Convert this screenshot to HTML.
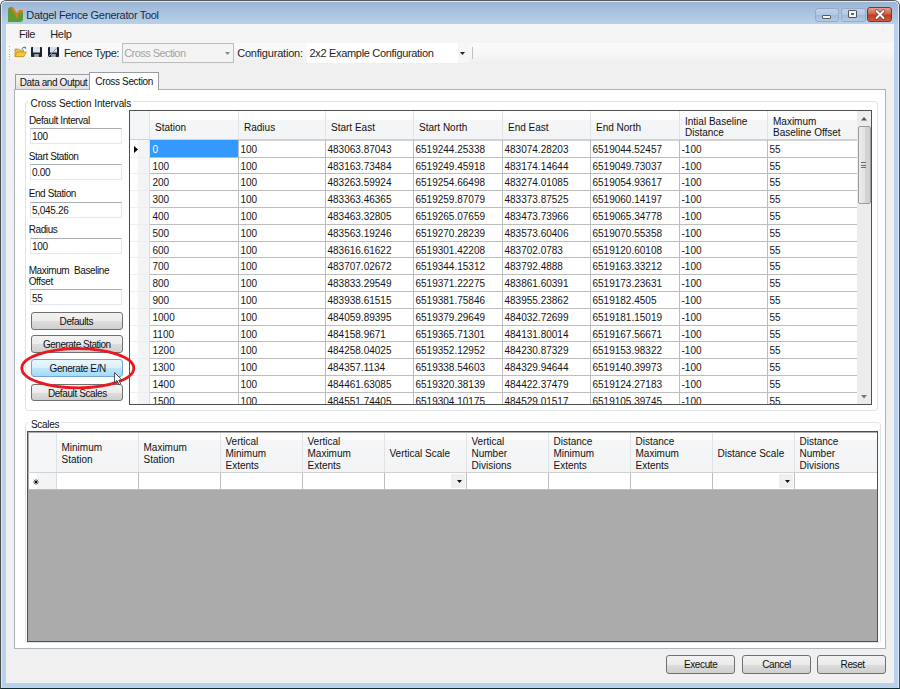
<!DOCTYPE html><html><head><meta charset="utf-8"><style>
html,body{margin:0;padding:0;width:900px;height:689px;overflow:hidden;background:#fff}
*{box-sizing:border-box}
.a{position:absolute}
.t{position:absolute;white-space:pre;font-family:"Liberation Sans",sans-serif;line-height:1}
.btn{position:absolute;border:1px solid #707070;border-radius:3px;background:linear-gradient(#f2f2f2 0%,#ebebeb 50%,#dddddd 51%,#cfcfcf 100%)}
.btnh{position:absolute;border:1px solid #6fa8d8;border-radius:3px;background:linear-gradient(#eaf6fd 0%,#d9f0fc 50%,#bee6fd 51%,#a7d9f5 100%)}
.tb{position:absolute;background:#fff;border:1px solid #e3e9ef;border-top-color:#abadb3}
</style></head><body>
<div class="a" style="left:0.0px;top:0.0px;width:900.0px;height:689.0px;background:#b9d1ea;border:1px solid #4a4a4a;border-top-color:#5a5a5a;border-bottom-color:#0a2a30;border-radius:6px 6px 0 0"></div>
<div class="a" style="left:1.0px;top:1.0px;width:898.0px;height:687.0px;border:1px solid #dbe9f9;border-bottom-color:#9fe3f3;border-radius:5px 5px 0 0"></div>
<div class="a" style="left:2.0px;top:2.0px;width:896.0px;height:22.0px;background:linear-gradient(#9bb5d5,#b8d1ea);border-radius:4px 4px 0 0"></div>
<svg class="a" style="left:8px;top:7px" width="16" height="16" viewBox="0 0 16 16">
<path d="M0 3 Q0 0 3 0 L4 0 L8.6 6.5 L11.5 3 L15 3 L15 12 Q15 15 12 15 L0 15 Z" fill="#5f9b35"/>
<path d="M4.2 0.6 L8.6 7.8 L12 4.2 L15 4.2 M8.6 7.5 L8.8 10.8" stroke="#e87a1c" stroke-width="2.2" fill="none" stroke-linejoin="bevel"/>
</svg>
<div class="t" style="left:26.3px;top:10.1px;font-size:11px;letter-spacing:-0.32px;color:#1b2b45;">Datgel Fence Generator Tool</div>
<div class="a" style="left:815.0px;top:8.0px;width:24.0px;height:14.0px;border:1px solid #93abc8;border-radius:3px;background:linear-gradient(#bfd3ea,#b0c8e4 50%,#9fb9d9 51%,#b3cbe6)"></div>
<div class="a" style="left:822.0px;top:14.5px;width:9.0px;height:4.0px;background:#f4f4f4;border:1px solid #5a5a5a;border-radius:1px"></div>
<div class="a" style="left:841.0px;top:8.0px;width:25.0px;height:14.0px;border:1px solid #93abc8;border-radius:3px;background:linear-gradient(#bfd3ea,#b0c8e4 50%,#9fb9d9 51%,#b3cbe6)"></div>
<div class="a" style="left:848.0px;top:10.0px;width:9.0px;height:8.0px;background:#f4f4f4;border:1px solid #555;border-radius:1px"></div>
<div class="a" style="left:851.0px;top:13.0px;width:3.0px;height:2.0px;background:#4b6a93"></div>
<div class="a" style="left:867.0px;top:7.0px;width:25.0px;height:15.0px;border:1px solid #6e3a3a;border-radius:3px;background:linear-gradient(#e8a08c,#d0604a 45%,#c33a20 55%,#d45a3c)"></div>
<svg class="a" style="left:874px;top:9px" width="12" height="11" viewBox="0 0 12 11"><path d="M2.5 2 L9.5 9 M9.5 2 L2.5 9" stroke="#6a4040" stroke-width="3.2" stroke-linecap="round"/><path d="M2.5 2 L9.5 9 M9.5 2 L2.5 9" stroke="#fff" stroke-width="1.9" stroke-linecap="round"/></svg>
<div class="a" style="left:6.0px;top:24.0px;width:888.0px;height:659.0px;background:#f0f0f0"></div>
<div class="a" style="left:6.0px;top:24.0px;width:888.0px;height:19.0px;background:#f5f5f5"></div>
<div class="t" style="left:19.1px;top:29.1px;font-size:11px;letter-spacing:-0.45px;color:#1e1e1e;">File</div>
<div class="t" style="left:50.2px;top:29.1px;font-size:11px;letter-spacing:-0.3px;color:#1e1e1e;">Help</div>
<div class="a" style="left:6.0px;top:43.0px;width:888.0px;height:21.0px;background:linear-gradient(#fafafa,#f7f7f7 50%,#eeeeee)"></div>
<div class="a" style="left:9.0px;top:46.0px;width:1.0px;height:1.0px;background:#b4b4b4"></div>
<div class="a" style="left:9.0px;top:48.5px;width:1.0px;height:1.0px;background:#b4b4b4"></div>
<div class="a" style="left:9.0px;top:51.0px;width:1.0px;height:1.0px;background:#b4b4b4"></div>
<div class="a" style="left:9.0px;top:53.5px;width:1.0px;height:1.0px;background:#b4b4b4"></div>
<div class="a" style="left:9.0px;top:56.0px;width:1.0px;height:1.0px;background:#b4b4b4"></div>
<div class="a" style="left:9.0px;top:58.5px;width:1.0px;height:1.0px;background:#b4b4b4"></div>
<svg class="a" style="left:14px;top:46px" width="13" height="12" viewBox="0 0 13 12">
<path d="M1 3 L4.5 3 L5.5 4 L9.5 4 L9.5 10.5 L1 10.5 Z" fill="#e6c260" stroke="#b89030" stroke-width="0.8"/>
<path d="M3 6 L12.3 6 L9.8 10.7 L1 10.7 Z" fill="#f4c838" stroke="#c09020" stroke-width="0.8"/>
<path d="M8 2.8 Q9.5 0.5 11.8 1.6" stroke="#3a70c0" stroke-width="1.1" fill="none"/><path d="M11 0.6 L12.6 2.2 L10.8 2.8 Z" fill="#3a70c0"/>
</svg>
<svg class="a" style="left:31px;top:47px" width="11" height="10" viewBox="0 0 11 10">
<rect x="0" y="0" width="11" height="10" rx="0.8" fill="#1c2330"/><rect x="2" y="0" width="7" height="5.5" fill="#dfe5ec"/><rect x="3.2" y="7" width="4.6" height="3" fill="#9aa2ac"/>
</svg>
<svg class="a" style="left:47px;top:47px" width="12" height="11" viewBox="0 0 12 11">
<rect x="1" y="0" width="11" height="10" rx="0.8" fill="#1c2330"/><rect x="3" y="0" width="7" height="5.5" fill="#d8dee6"/><rect x="4.2" y="7" width="4.6" height="3" fill="#9aa2ac"/>
<path d="M0.5 10.5 L9.5 1.5" stroke="#8a96a6" stroke-width="1"/>
</svg>
<div class="t" style="left:64.0px;top:47.9px;font-size:11px;letter-spacing:-0.5px;color:#1e1e1e;">Fence Type:</div>
<div class="a" style="left:122.0px;top:43.0px;width:112.0px;height:20.0px;background:#f4f4f4;border:1px solid #bdbdbd"></div>
<div class="t" style="left:124.2px;top:47.9px;font-size:11px;letter-spacing:-0.55px;color:#a3a3a3;">Cross Section</div>
<svg class="a" style="left:225px;top:52px" width="5" height="3"><path d="M0 0 L5 0 L2.5 3 Z" fill="#888"/></svg>
<div class="t" style="left:237.2px;top:47.9px;font-size:11px;letter-spacing:-0.2px;color:#1e1e1e;">Configuration:</div>
<div class="a" style="left:307.0px;top:43.0px;width:162.0px;height:20.0px;background:#fff"></div>
<div class="a" style="left:458.0px;top:43.0px;width:11.0px;height:20.0px;background:#f6f6f6"></div>
<div class="t" style="left:309.5px;top:47.9px;font-size:11px;letter-spacing:-0.32px;color:#1e1e1e;">2x2 Example Configuration</div>
<svg class="a" style="left:460px;top:52px" width="5" height="3"><path d="M0 0 L5 0 L2.5 3 Z" fill="#222"/></svg>
<div class="a" style="left:472.0px;top:47.0px;width:1.0px;height:12.0px;background:#c0c0c0"></div>
<div class="a" style="left:15.0px;top:74.0px;width:75.0px;height:16.0px;border:1px solid #9a9ca4;border-bottom:none;background:linear-gradient(#f3f3f3,#ebebeb 50%,#dedede)"></div>
<div class="t" style="left:19.8px;top:78.0px;font-size:10px;letter-spacing:-0.4px;color:#111;">Data and Output</div>
<div class="a" style="left:14.0px;top:89.0px;width:872.0px;height:560.0px;background:#fff;border:1px solid #aeb2b9"></div>
<div class="a" style="left:89.0px;top:72.0px;width:70.0px;height:18.0px;border:1px solid #9a9ca4;border-bottom:none;background:#fff"></div>
<div class="t" style="left:95.3px;top:76.9px;font-size:10px;letter-spacing:-0.35px;color:#111;">Cross Section</div>
<div class="a" style="left:24.8px;top:101.3px;width:853.2px;height:309.7px;border:1px solid #dce4e9;border-radius:3px"></div>
<div class="a" style="left:28.0px;top:97.0px;width:106.0px;height:7.0px;background:#fff"></div>
<div class="t" style="left:30.6px;top:98.7px;font-size:10px;letter-spacing:-0.1px;color:#111;">Cross Section Intervals</div>
<div class="t" style="left:29.0px;top:115.6px;font-size:10px;letter-spacing:-0.4px;color:#111;">Default Interval</div>
<div class="t" style="left:28.7px;top:151.5px;font-size:10px;letter-spacing:-0.4px;color:#111;">Start Station</div>
<div class="t" style="left:28.7px;top:189.1px;font-size:10px;letter-spacing:-0.4px;color:#111;">End Station</div>
<div class="t" style="left:28.7px;top:225.4px;font-size:10px;letter-spacing:-0.4px;color:#111;">Radius</div>
<div class="t" style="left:28.7px;top:265.8px;font-size:10px;letter-spacing:-0.4px;color:#111;">Maximum  Baseline</div>
<div class="t" style="left:28.7px;top:276.8px;font-size:10px;letter-spacing:-0.4px;color:#111;">Offset</div>
<div class="a" style="left:30.0px;top:128.0px;width:92.0px;height:16.0px;background:#fff;border:1px solid #e3e9ef;border-top-color:#abadb3;border-left-color:#e2e3ea"></div>
<div class="t" style="left:32.0px;top:132.4px;font-size:10px;letter-spacing:-0.3px;color:#111;">100</div>
<div class="a" style="left:30.0px;top:164.0px;width:92.0px;height:16.0px;background:#fff;border:1px solid #e3e9ef;border-top-color:#abadb3;border-left-color:#e2e3ea"></div>
<div class="t" style="left:32.0px;top:168.4px;font-size:10px;letter-spacing:-0.3px;color:#111;">0.00</div>
<div class="a" style="left:30.0px;top:202.0px;width:92.0px;height:15.5px;background:#fff;border:1px solid #e3e9ef;border-top-color:#abadb3;border-left-color:#e2e3ea"></div>
<div class="t" style="left:32.0px;top:206.4px;font-size:10px;letter-spacing:-0.3px;color:#111;">5,045.26</div>
<div class="a" style="left:30.0px;top:238.0px;width:92.0px;height:16.0px;background:#fff;border:1px solid #e3e9ef;border-top-color:#abadb3;border-left-color:#e2e3ea"></div>
<div class="t" style="left:32.0px;top:242.4px;font-size:10px;letter-spacing:-0.3px;color:#111;">100</div>
<div class="a" style="left:30.0px;top:289.4px;width:92.0px;height:15.6px;background:#fff;border:1px solid #e3e9ef;border-top-color:#abadb3;border-left-color:#e2e3ea"></div>
<div class="t" style="left:32.0px;top:293.8px;font-size:10px;letter-spacing:-0.3px;color:#111;">55</div>
<div class="btn" style="left:31px;top:312.3px;width:92px;height:17.4px"></div>
<div class="t" style="left:59.6px;top:316.8px;font-size:10px;letter-spacing:-0.4px;color:#111;">Defaults</div>
<div class="btn" style="left:31px;top:335.2px;width:92px;height:17.4px"></div>
<div class="t" style="left:43.0px;top:339.7px;font-size:10px;letter-spacing:-0.5px;color:#111;">Generate Station</div>
<div class="btnh" style="left:31px;top:359.4px;width:92px;height:17.7px"></div>
<div class="t" style="left:49.5px;top:363.9px;font-size:10px;letter-spacing:-0.4px;color:#111;">Generate E/N</div>
<div class="btn" style="left:31px;top:384.4px;width:92px;height:17.1px"></div>
<div class="t" style="left:47.9px;top:388.9px;font-size:10px;letter-spacing:-0.4px;color:#111;">Default Scales</div>
<div class="a" style="left:129.0px;top:110.0px;width:743.0px;height:295.0px;background:#fff;border:1px solid #505050"></div>
<div class="a" style="left:130.0px;top:111.0px;width:727.0px;height:28.0px;background:linear-gradient(#ffffff 0%,#ffffff 30%,#f5f6f8 31%,#f3f4f6 100%)"></div>
<div class="a" style="left:130.0px;top:111.0px;width:19.0px;height:28.0px;background:#f5f6f8"></div>
<div class="a" style="left:148.5px;top:111.0px;width:1.5px;height:28.0px;background:#dadbde"></div>
<div class="a" style="left:130.0px;top:138.5px;width:727.0px;height:2.0px;background:#d2d2d2"></div>
<div class="a" style="left:149.0px;top:111.0px;width:1.0px;height:28.0px;background:#e2e3e6"></div>
<div class="a" style="left:238.0px;top:111.0px;width:1.0px;height:28.0px;background:#e2e3e6"></div>
<div class="a" style="left:325.0px;top:111.0px;width:1.0px;height:28.0px;background:#e2e3e6"></div>
<div class="a" style="left:413.0px;top:111.0px;width:1.0px;height:28.0px;background:#e2e3e6"></div>
<div class="a" style="left:502.0px;top:111.0px;width:1.0px;height:28.0px;background:#e2e3e6"></div>
<div class="a" style="left:590.0px;top:111.0px;width:1.0px;height:28.0px;background:#e2e3e6"></div>
<div class="a" style="left:679.0px;top:111.0px;width:1.0px;height:28.0px;background:#e2e3e6"></div>
<div class="a" style="left:767.0px;top:111.0px;width:1.0px;height:28.0px;background:#e2e3e6"></div>
<div class="a" style="left:857.0px;top:111.0px;width:1.0px;height:28.0px;background:#e2e3e6"></div>
<div class="t" style="left:155.0px;top:122.6px;font-size:10px;letter-spacing:0px;color:#111;">Station</div>
<div class="t" style="left:244.0px;top:122.6px;font-size:10px;letter-spacing:0px;color:#111;">Radius</div>
<div class="t" style="left:331.0px;top:122.6px;font-size:10px;letter-spacing:0px;color:#111;">Start East</div>
<div class="t" style="left:419.0px;top:122.6px;font-size:10px;letter-spacing:0px;color:#111;">Start North</div>
<div class="t" style="left:508.0px;top:122.6px;font-size:10px;letter-spacing:0px;color:#111;">End East</div>
<div class="t" style="left:596.0px;top:122.6px;font-size:10px;letter-spacing:0px;color:#111;">End North</div>
<div class="t" style="left:685.0px;top:116.6px;font-size:10px;letter-spacing:0px;color:#111;">Intial Baseline</div>
<div class="t" style="left:685.0px;top:128.2px;font-size:10px;letter-spacing:0px;color:#111;">Distance</div>
<div class="t" style="left:773.0px;top:116.6px;font-size:10px;letter-spacing:0px;color:#111;">Maximum</div>
<div class="t" style="left:773.0px;top:128.2px;font-size:10px;letter-spacing:0px;color:#111;">Baseline Offset</div>
<div class="a" style="left:130.0px;top:140.0px;width:19.0px;height:264.0px;background:linear-gradient(90deg,#ffffff 0,#ffffff 7px,#f4f5f7 8px,#f2f3f5 100%)"></div>
<div class="a" style="left:150.0px;top:140.0px;width:88.0px;height:16.5px;background:#3399ff"></div>
<div class="t" style="left:152.5px;top:144.8px;font-size:10px;letter-spacing:0px;color:#fff;">0</div>
<div class="t" style="left:240.5px;top:144.8px;font-size:10px;letter-spacing:0px;color:#151515;">100</div>
<div class="t" style="left:327.5px;top:144.8px;font-size:10px;letter-spacing:0px;color:#151515;">483063.87043</div>
<div class="t" style="left:415.5px;top:144.8px;font-size:10px;letter-spacing:0px;color:#151515;">6519244.25338</div>
<div class="t" style="left:504.5px;top:144.8px;font-size:10px;letter-spacing:0px;color:#151515;">483074.28203</div>
<div class="t" style="left:592.5px;top:144.8px;font-size:10px;letter-spacing:0px;color:#151515;">6519044.52457</div>
<div class="t" style="left:681.5px;top:144.8px;font-size:10px;letter-spacing:0px;color:#151515;">-100</div>
<div class="t" style="left:769.5px;top:144.8px;font-size:10px;letter-spacing:0px;color:#151515;">55</div>
<div class="a" style="left:150.0px;top:156.5px;width:707.0px;height:1.0px;background:#bdbdbd"></div>
<div class="a" style="left:130.0px;top:156.5px;width:19.0px;height:1.0px;background:#eeeff2"></div>
<div class="t" style="left:152.5px;top:161.6px;font-size:10px;letter-spacing:0px;color:#151515;">100</div>
<div class="t" style="left:240.5px;top:161.6px;font-size:10px;letter-spacing:0px;color:#151515;">100</div>
<div class="t" style="left:327.5px;top:161.6px;font-size:10px;letter-spacing:0px;color:#151515;">483163.73484</div>
<div class="t" style="left:415.5px;top:161.6px;font-size:10px;letter-spacing:0px;color:#151515;">6519249.45918</div>
<div class="t" style="left:504.5px;top:161.6px;font-size:10px;letter-spacing:0px;color:#151515;">483174.14644</div>
<div class="t" style="left:592.5px;top:161.6px;font-size:10px;letter-spacing:0px;color:#151515;">6519049.73037</div>
<div class="t" style="left:681.5px;top:161.6px;font-size:10px;letter-spacing:0px;color:#151515;">-100</div>
<div class="t" style="left:769.5px;top:161.6px;font-size:10px;letter-spacing:0px;color:#151515;">55</div>
<div class="a" style="left:150.0px;top:173.3px;width:707.0px;height:1.0px;background:#bdbdbd"></div>
<div class="a" style="left:130.0px;top:173.3px;width:19.0px;height:1.0px;background:#eeeff2"></div>
<div class="t" style="left:152.5px;top:178.4px;font-size:10px;letter-spacing:0px;color:#151515;">200</div>
<div class="t" style="left:240.5px;top:178.4px;font-size:10px;letter-spacing:0px;color:#151515;">100</div>
<div class="t" style="left:327.5px;top:178.4px;font-size:10px;letter-spacing:0px;color:#151515;">483263.59924</div>
<div class="t" style="left:415.5px;top:178.4px;font-size:10px;letter-spacing:0px;color:#151515;">6519254.66498</div>
<div class="t" style="left:504.5px;top:178.4px;font-size:10px;letter-spacing:0px;color:#151515;">483274.01085</div>
<div class="t" style="left:592.5px;top:178.4px;font-size:10px;letter-spacing:0px;color:#151515;">6519054.93617</div>
<div class="t" style="left:681.5px;top:178.4px;font-size:10px;letter-spacing:0px;color:#151515;">-100</div>
<div class="t" style="left:769.5px;top:178.4px;font-size:10px;letter-spacing:0px;color:#151515;">55</div>
<div class="a" style="left:150.0px;top:190.1px;width:707.0px;height:1.0px;background:#bdbdbd"></div>
<div class="a" style="left:130.0px;top:190.1px;width:19.0px;height:1.0px;background:#eeeff2"></div>
<div class="t" style="left:152.5px;top:195.2px;font-size:10px;letter-spacing:0px;color:#151515;">300</div>
<div class="t" style="left:240.5px;top:195.2px;font-size:10px;letter-spacing:0px;color:#151515;">100</div>
<div class="t" style="left:327.5px;top:195.2px;font-size:10px;letter-spacing:0px;color:#151515;">483363.46365</div>
<div class="t" style="left:415.5px;top:195.2px;font-size:10px;letter-spacing:0px;color:#151515;">6519259.87079</div>
<div class="t" style="left:504.5px;top:195.2px;font-size:10px;letter-spacing:0px;color:#151515;">483373.87525</div>
<div class="t" style="left:592.5px;top:195.2px;font-size:10px;letter-spacing:0px;color:#151515;">6519060.14197</div>
<div class="t" style="left:681.5px;top:195.2px;font-size:10px;letter-spacing:0px;color:#151515;">-100</div>
<div class="t" style="left:769.5px;top:195.2px;font-size:10px;letter-spacing:0px;color:#151515;">55</div>
<div class="a" style="left:150.0px;top:206.9px;width:707.0px;height:1.0px;background:#bdbdbd"></div>
<div class="a" style="left:130.0px;top:206.9px;width:19.0px;height:1.0px;background:#eeeff2"></div>
<div class="t" style="left:152.5px;top:212.0px;font-size:10px;letter-spacing:0px;color:#151515;">400</div>
<div class="t" style="left:240.5px;top:212.0px;font-size:10px;letter-spacing:0px;color:#151515;">100</div>
<div class="t" style="left:327.5px;top:212.0px;font-size:10px;letter-spacing:0px;color:#151515;">483463.32805</div>
<div class="t" style="left:415.5px;top:212.0px;font-size:10px;letter-spacing:0px;color:#151515;">6519265.07659</div>
<div class="t" style="left:504.5px;top:212.0px;font-size:10px;letter-spacing:0px;color:#151515;">483473.73966</div>
<div class="t" style="left:592.5px;top:212.0px;font-size:10px;letter-spacing:0px;color:#151515;">6519065.34778</div>
<div class="t" style="left:681.5px;top:212.0px;font-size:10px;letter-spacing:0px;color:#151515;">-100</div>
<div class="t" style="left:769.5px;top:212.0px;font-size:10px;letter-spacing:0px;color:#151515;">55</div>
<div class="a" style="left:150.0px;top:223.7px;width:707.0px;height:1.0px;background:#bdbdbd"></div>
<div class="a" style="left:130.0px;top:223.7px;width:19.0px;height:1.0px;background:#eeeff2"></div>
<div class="t" style="left:152.5px;top:228.8px;font-size:10px;letter-spacing:0px;color:#151515;">500</div>
<div class="t" style="left:240.5px;top:228.8px;font-size:10px;letter-spacing:0px;color:#151515;">100</div>
<div class="t" style="left:327.5px;top:228.8px;font-size:10px;letter-spacing:0px;color:#151515;">483563.19246</div>
<div class="t" style="left:415.5px;top:228.8px;font-size:10px;letter-spacing:0px;color:#151515;">6519270.28239</div>
<div class="t" style="left:504.5px;top:228.8px;font-size:10px;letter-spacing:0px;color:#151515;">483573.60406</div>
<div class="t" style="left:592.5px;top:228.8px;font-size:10px;letter-spacing:0px;color:#151515;">6519070.55358</div>
<div class="t" style="left:681.5px;top:228.8px;font-size:10px;letter-spacing:0px;color:#151515;">-100</div>
<div class="t" style="left:769.5px;top:228.8px;font-size:10px;letter-spacing:0px;color:#151515;">55</div>
<div class="a" style="left:150.0px;top:240.5px;width:707.0px;height:1.0px;background:#bdbdbd"></div>
<div class="a" style="left:130.0px;top:240.5px;width:19.0px;height:1.0px;background:#eeeff2"></div>
<div class="t" style="left:152.5px;top:245.6px;font-size:10px;letter-spacing:0px;color:#151515;">600</div>
<div class="t" style="left:240.5px;top:245.6px;font-size:10px;letter-spacing:0px;color:#151515;">100</div>
<div class="t" style="left:327.5px;top:245.6px;font-size:10px;letter-spacing:0px;color:#151515;">483616.61622</div>
<div class="t" style="left:415.5px;top:245.6px;font-size:10px;letter-spacing:0px;color:#151515;">6519301.42208</div>
<div class="t" style="left:504.5px;top:245.6px;font-size:10px;letter-spacing:0px;color:#151515;">483702.0783</div>
<div class="t" style="left:592.5px;top:245.6px;font-size:10px;letter-spacing:0px;color:#151515;">6519120.60108</div>
<div class="t" style="left:681.5px;top:245.6px;font-size:10px;letter-spacing:0px;color:#151515;">-100</div>
<div class="t" style="left:769.5px;top:245.6px;font-size:10px;letter-spacing:0px;color:#151515;">55</div>
<div class="a" style="left:150.0px;top:257.3px;width:707.0px;height:1.0px;background:#bdbdbd"></div>
<div class="a" style="left:130.0px;top:257.3px;width:19.0px;height:1.0px;background:#eeeff2"></div>
<div class="t" style="left:152.5px;top:262.4px;font-size:10px;letter-spacing:0px;color:#151515;">700</div>
<div class="t" style="left:240.5px;top:262.4px;font-size:10px;letter-spacing:0px;color:#151515;">100</div>
<div class="t" style="left:327.5px;top:262.4px;font-size:10px;letter-spacing:0px;color:#151515;">483707.02672</div>
<div class="t" style="left:415.5px;top:262.4px;font-size:10px;letter-spacing:0px;color:#151515;">6519344.15312</div>
<div class="t" style="left:504.5px;top:262.4px;font-size:10px;letter-spacing:0px;color:#151515;">483792.4888</div>
<div class="t" style="left:592.5px;top:262.4px;font-size:10px;letter-spacing:0px;color:#151515;">6519163.33212</div>
<div class="t" style="left:681.5px;top:262.4px;font-size:10px;letter-spacing:0px;color:#151515;">-100</div>
<div class="t" style="left:769.5px;top:262.4px;font-size:10px;letter-spacing:0px;color:#151515;">55</div>
<div class="a" style="left:150.0px;top:274.1px;width:707.0px;height:1.0px;background:#bdbdbd"></div>
<div class="a" style="left:130.0px;top:274.1px;width:19.0px;height:1.0px;background:#eeeff2"></div>
<div class="t" style="left:152.5px;top:279.2px;font-size:10px;letter-spacing:0px;color:#151515;">800</div>
<div class="t" style="left:240.5px;top:279.2px;font-size:10px;letter-spacing:0px;color:#151515;">100</div>
<div class="t" style="left:327.5px;top:279.2px;font-size:10px;letter-spacing:0px;color:#151515;">483833.29549</div>
<div class="t" style="left:415.5px;top:279.2px;font-size:10px;letter-spacing:0px;color:#151515;">6519371.22275</div>
<div class="t" style="left:504.5px;top:279.2px;font-size:10px;letter-spacing:0px;color:#151515;">483861.60391</div>
<div class="t" style="left:592.5px;top:279.2px;font-size:10px;letter-spacing:0px;color:#151515;">6519173.23631</div>
<div class="t" style="left:681.5px;top:279.2px;font-size:10px;letter-spacing:0px;color:#151515;">-100</div>
<div class="t" style="left:769.5px;top:279.2px;font-size:10px;letter-spacing:0px;color:#151515;">55</div>
<div class="a" style="left:150.0px;top:290.9px;width:707.0px;height:1.0px;background:#bdbdbd"></div>
<div class="a" style="left:130.0px;top:290.9px;width:19.0px;height:1.0px;background:#eeeff2"></div>
<div class="t" style="left:152.5px;top:296.0px;font-size:10px;letter-spacing:0px;color:#151515;">900</div>
<div class="t" style="left:240.5px;top:296.0px;font-size:10px;letter-spacing:0px;color:#151515;">100</div>
<div class="t" style="left:327.5px;top:296.0px;font-size:10px;letter-spacing:0px;color:#151515;">483938.61515</div>
<div class="t" style="left:415.5px;top:296.0px;font-size:10px;letter-spacing:0px;color:#151515;">6519381.75846</div>
<div class="t" style="left:504.5px;top:296.0px;font-size:10px;letter-spacing:0px;color:#151515;">483955.23862</div>
<div class="t" style="left:592.5px;top:296.0px;font-size:10px;letter-spacing:0px;color:#151515;">6519182.4505</div>
<div class="t" style="left:681.5px;top:296.0px;font-size:10px;letter-spacing:0px;color:#151515;">-100</div>
<div class="t" style="left:769.5px;top:296.0px;font-size:10px;letter-spacing:0px;color:#151515;">55</div>
<div class="a" style="left:150.0px;top:307.7px;width:707.0px;height:1.0px;background:#bdbdbd"></div>
<div class="a" style="left:130.0px;top:307.7px;width:19.0px;height:1.0px;background:#eeeff2"></div>
<div class="t" style="left:152.5px;top:312.8px;font-size:10px;letter-spacing:0px;color:#151515;">1000</div>
<div class="t" style="left:240.5px;top:312.8px;font-size:10px;letter-spacing:0px;color:#151515;">100</div>
<div class="t" style="left:327.5px;top:312.8px;font-size:10px;letter-spacing:0px;color:#151515;">484059.89395</div>
<div class="t" style="left:415.5px;top:312.8px;font-size:10px;letter-spacing:0px;color:#151515;">6519379.29649</div>
<div class="t" style="left:504.5px;top:312.8px;font-size:10px;letter-spacing:0px;color:#151515;">484032.72699</div>
<div class="t" style="left:592.5px;top:312.8px;font-size:10px;letter-spacing:0px;color:#151515;">6519181.15019</div>
<div class="t" style="left:681.5px;top:312.8px;font-size:10px;letter-spacing:0px;color:#151515;">-100</div>
<div class="t" style="left:769.5px;top:312.8px;font-size:10px;letter-spacing:0px;color:#151515;">55</div>
<div class="a" style="left:150.0px;top:324.5px;width:707.0px;height:1.0px;background:#bdbdbd"></div>
<div class="a" style="left:130.0px;top:324.5px;width:19.0px;height:1.0px;background:#eeeff2"></div>
<div class="t" style="left:152.5px;top:329.6px;font-size:10px;letter-spacing:0px;color:#151515;">1100</div>
<div class="t" style="left:240.5px;top:329.6px;font-size:10px;letter-spacing:0px;color:#151515;">100</div>
<div class="t" style="left:327.5px;top:329.6px;font-size:10px;letter-spacing:0px;color:#151515;">484158.9671</div>
<div class="t" style="left:415.5px;top:329.6px;font-size:10px;letter-spacing:0px;color:#151515;">6519365.71301</div>
<div class="t" style="left:504.5px;top:329.6px;font-size:10px;letter-spacing:0px;color:#151515;">484131.80014</div>
<div class="t" style="left:592.5px;top:329.6px;font-size:10px;letter-spacing:0px;color:#151515;">6519167.56671</div>
<div class="t" style="left:681.5px;top:329.6px;font-size:10px;letter-spacing:0px;color:#151515;">-100</div>
<div class="t" style="left:769.5px;top:329.6px;font-size:10px;letter-spacing:0px;color:#151515;">55</div>
<div class="a" style="left:150.0px;top:341.3px;width:707.0px;height:1.0px;background:#bdbdbd"></div>
<div class="a" style="left:130.0px;top:341.3px;width:19.0px;height:1.0px;background:#eeeff2"></div>
<div class="t" style="left:152.5px;top:346.4px;font-size:10px;letter-spacing:0px;color:#151515;">1200</div>
<div class="t" style="left:240.5px;top:346.4px;font-size:10px;letter-spacing:0px;color:#151515;">100</div>
<div class="t" style="left:327.5px;top:346.4px;font-size:10px;letter-spacing:0px;color:#151515;">484258.04025</div>
<div class="t" style="left:415.5px;top:346.4px;font-size:10px;letter-spacing:0px;color:#151515;">6519352.12952</div>
<div class="t" style="left:504.5px;top:346.4px;font-size:10px;letter-spacing:0px;color:#151515;">484230.87329</div>
<div class="t" style="left:592.5px;top:346.4px;font-size:10px;letter-spacing:0px;color:#151515;">6519153.98322</div>
<div class="t" style="left:681.5px;top:346.4px;font-size:10px;letter-spacing:0px;color:#151515;">-100</div>
<div class="t" style="left:769.5px;top:346.4px;font-size:10px;letter-spacing:0px;color:#151515;">55</div>
<div class="a" style="left:150.0px;top:358.1px;width:707.0px;height:1.0px;background:#bdbdbd"></div>
<div class="a" style="left:130.0px;top:358.1px;width:19.0px;height:1.0px;background:#eeeff2"></div>
<div class="t" style="left:152.5px;top:363.2px;font-size:10px;letter-spacing:0px;color:#151515;">1300</div>
<div class="t" style="left:240.5px;top:363.2px;font-size:10px;letter-spacing:0px;color:#151515;">100</div>
<div class="t" style="left:327.5px;top:363.2px;font-size:10px;letter-spacing:0px;color:#151515;">484357.1134</div>
<div class="t" style="left:415.5px;top:363.2px;font-size:10px;letter-spacing:0px;color:#151515;">6519338.54603</div>
<div class="t" style="left:504.5px;top:363.2px;font-size:10px;letter-spacing:0px;color:#151515;">484329.94644</div>
<div class="t" style="left:592.5px;top:363.2px;font-size:10px;letter-spacing:0px;color:#151515;">6519140.39973</div>
<div class="t" style="left:681.5px;top:363.2px;font-size:10px;letter-spacing:0px;color:#151515;">-100</div>
<div class="t" style="left:769.5px;top:363.2px;font-size:10px;letter-spacing:0px;color:#151515;">55</div>
<div class="a" style="left:150.0px;top:374.9px;width:707.0px;height:1.0px;background:#bdbdbd"></div>
<div class="a" style="left:130.0px;top:374.9px;width:19.0px;height:1.0px;background:#eeeff2"></div>
<div class="t" style="left:152.5px;top:380.0px;font-size:10px;letter-spacing:0px;color:#151515;">1400</div>
<div class="t" style="left:240.5px;top:380.0px;font-size:10px;letter-spacing:0px;color:#151515;">100</div>
<div class="t" style="left:327.5px;top:380.0px;font-size:10px;letter-spacing:0px;color:#151515;">484461.63085</div>
<div class="t" style="left:415.5px;top:380.0px;font-size:10px;letter-spacing:0px;color:#151515;">6519320.38139</div>
<div class="t" style="left:504.5px;top:380.0px;font-size:10px;letter-spacing:0px;color:#151515;">484422.37479</div>
<div class="t" style="left:592.5px;top:380.0px;font-size:10px;letter-spacing:0px;color:#151515;">6519124.27183</div>
<div class="t" style="left:681.5px;top:380.0px;font-size:10px;letter-spacing:0px;color:#151515;">-100</div>
<div class="t" style="left:769.5px;top:380.0px;font-size:10px;letter-spacing:0px;color:#151515;">55</div>
<div class="a" style="left:150.0px;top:391.7px;width:707.0px;height:1.0px;background:#bdbdbd"></div>
<div class="a" style="left:130.0px;top:391.7px;width:19.0px;height:1.0px;background:#eeeff2"></div>
<div class="t" style="left:152.5px;top:396.8px;font-size:10px;letter-spacing:0px;color:#151515;">1500</div>
<div class="t" style="left:240.5px;top:396.8px;font-size:10px;letter-spacing:0px;color:#151515;">100</div>
<div class="t" style="left:327.5px;top:396.8px;font-size:10px;letter-spacing:0px;color:#151515;">484551.74405</div>
<div class="t" style="left:415.5px;top:396.8px;font-size:10px;letter-spacing:0px;color:#151515;">6519304.10175</div>
<div class="t" style="left:504.5px;top:396.8px;font-size:10px;letter-spacing:0px;color:#151515;">484529.01517</div>
<div class="t" style="left:592.5px;top:396.8px;font-size:10px;letter-spacing:0px;color:#151515;">6519105.39745</div>
<div class="t" style="left:681.5px;top:396.8px;font-size:10px;letter-spacing:0px;color:#151515;">-100</div>
<div class="t" style="left:769.5px;top:396.8px;font-size:10px;letter-spacing:0px;color:#151515;">55</div>
<div class="a" style="left:238.0px;top:140.0px;width:1.0px;height:264.0px;background:#bdbdbd"></div>
<div class="a" style="left:325.0px;top:140.0px;width:1.0px;height:264.0px;background:#bdbdbd"></div>
<div class="a" style="left:413.0px;top:140.0px;width:1.0px;height:264.0px;background:#bdbdbd"></div>
<div class="a" style="left:502.0px;top:140.0px;width:1.0px;height:264.0px;background:#bdbdbd"></div>
<div class="a" style="left:590.0px;top:140.0px;width:1.0px;height:264.0px;background:#bdbdbd"></div>
<div class="a" style="left:679.0px;top:140.0px;width:1.0px;height:264.0px;background:#bdbdbd"></div>
<div class="a" style="left:767.0px;top:140.0px;width:1.0px;height:264.0px;background:#bdbdbd"></div>
<div class="a" style="left:857.0px;top:140.0px;width:1.0px;height:264.0px;background:#bdbdbd"></div>
<div class="a" style="left:149.0px;top:140.0px;width:1.0px;height:264.0px;background:#dcdcdc"></div>
<svg class="a" style="left:134px;top:146px" width="4" height="7"><path d="M0 0 L4 3.5 L0 7 Z" fill="#000"/></svg>
<div class="a" style="left:857.0px;top:111.0px;width:14.0px;height:293.0px;background:#ececec"></div>
<div class="a" style="left:857.0px;top:111.0px;width:14.0px;height:15.0px;background:#ececec"></div>
<svg class="a" style="left:860.5px;top:116.5px" width="6" height="4"><path d="M0 3.5 L3 0 L6 3.5 Z" fill="#555"/></svg>
<div class="a" style="left:857.5px;top:126.0px;width:13.0px;height:78.0px;border:1px solid #9b9b9b;border-radius:2px;background:linear-gradient(90deg,#ececec,#e2e2e2 50%,#d6d6d6 51%,#cfcfcf)"></div>
<div class="a" style="left:861.0px;top:162.0px;width:5.0px;height:1.0px;background:#6a6a6a"></div>
<div class="a" style="left:861.0px;top:164.5px;width:5.0px;height:1.0px;background:#6a6a6a"></div>
<div class="a" style="left:861.0px;top:167.0px;width:5.0px;height:1.0px;background:#6a6a6a"></div>
<svg class="a" style="left:860.5px;top:394.5px" width="6" height="4"><path d="M0 0 L6 0 L3 3.5 Z" fill="#777"/></svg>
<div class="a" style="left:129.0px;top:403.5px;width:743.0px;height:1.5px;background:#505050"></div>
<div class="a" style="left:25.0px;top:422.3px;width:855.5px;height:221.2px;border:1px solid #dce4e9;border-radius:3px"></div>
<div class="a" style="left:28.0px;top:418.0px;width:33.0px;height:7.0px;background:#fff"></div>
<div class="t" style="left:31.0px;top:419.8px;font-size:10px;letter-spacing:-0.3px;color:#111;">Scales</div>
<div class="a" style="left:27.0px;top:431.0px;width:851.0px;height:211.0px;background:#ababab;border:1px solid #505050"></div>
<div class="a" style="left:28.7px;top:432.7px;width:848.3px;height:39.3px;background:linear-gradient(#ffffff 0%,#ffffff 18%,#f5f6f8 19%,#f3f4f6 100%)"></div>
<div class="a" style="left:28.7px;top:432.7px;width:27.3px;height:39.3px;background:#f5f6f8"></div>
<div class="a" style="left:28.0px;top:471.5px;width:849.0px;height:1.5px;background:#d2d2d2"></div>
<div class="a" style="left:28.7px;top:473.0px;width:848.3px;height:16.0px;background:#fff"></div>
<div class="a" style="left:28.7px;top:473.0px;width:27.3px;height:16.0px;background:linear-gradient(90deg,#fff 0,#fff 7px,#f4f5f7 8px,#f2f3f5)"></div>
<div class="a" style="left:56.0px;top:432.7px;width:1.0px;height:39.3px;background:#e2e3e6"></div>
<div class="a" style="left:56.0px;top:473.0px;width:1.0px;height:16.0px;background:#dcdcdc"></div>
<div class="a" style="left:138.0px;top:432.7px;width:1.0px;height:39.3px;background:#e2e3e6"></div>
<div class="a" style="left:138.0px;top:473.0px;width:1.0px;height:16.0px;background:#bdbdbd"></div>
<div class="a" style="left:220.0px;top:432.7px;width:1.0px;height:39.3px;background:#e2e3e6"></div>
<div class="a" style="left:220.0px;top:473.0px;width:1.0px;height:16.0px;background:#bdbdbd"></div>
<div class="a" style="left:302.0px;top:432.7px;width:1.0px;height:39.3px;background:#e2e3e6"></div>
<div class="a" style="left:302.0px;top:473.0px;width:1.0px;height:16.0px;background:#bdbdbd"></div>
<div class="a" style="left:384.0px;top:432.7px;width:1.0px;height:39.3px;background:#e2e3e6"></div>
<div class="a" style="left:384.0px;top:473.0px;width:1.0px;height:16.0px;background:#bdbdbd"></div>
<div class="a" style="left:466.0px;top:432.7px;width:1.0px;height:39.3px;background:#e2e3e6"></div>
<div class="a" style="left:466.0px;top:473.0px;width:1.0px;height:16.0px;background:#bdbdbd"></div>
<div class="a" style="left:548.0px;top:432.7px;width:1.0px;height:39.3px;background:#e2e3e6"></div>
<div class="a" style="left:548.0px;top:473.0px;width:1.0px;height:16.0px;background:#bdbdbd"></div>
<div class="a" style="left:630.0px;top:432.7px;width:1.0px;height:39.3px;background:#e2e3e6"></div>
<div class="a" style="left:630.0px;top:473.0px;width:1.0px;height:16.0px;background:#bdbdbd"></div>
<div class="a" style="left:712.0px;top:432.7px;width:1.0px;height:39.3px;background:#e2e3e6"></div>
<div class="a" style="left:712.0px;top:473.0px;width:1.0px;height:16.0px;background:#bdbdbd"></div>
<div class="a" style="left:794.0px;top:432.7px;width:1.0px;height:39.3px;background:#e2e3e6"></div>
<div class="a" style="left:794.0px;top:473.0px;width:1.0px;height:16.0px;background:#bdbdbd"></div>
<div class="t" style="left:61.5px;top:442.8px;font-size:10px;letter-spacing:0px;color:#111;">Minimum</div>
<div class="t" style="left:61.5px;top:454.5px;font-size:10px;letter-spacing:0px;color:#111;">Station</div>
<div class="t" style="left:143.5px;top:442.8px;font-size:10px;letter-spacing:0px;color:#111;">Maximum</div>
<div class="t" style="left:143.5px;top:454.5px;font-size:10px;letter-spacing:0px;color:#111;">Station</div>
<div class="t" style="left:225.5px;top:437.2px;font-size:10px;letter-spacing:0px;color:#111;">Vertical</div>
<div class="t" style="left:225.5px;top:448.9px;font-size:10px;letter-spacing:0px;color:#111;">Minimum</div>
<div class="t" style="left:225.5px;top:460.6px;font-size:10px;letter-spacing:0px;color:#111;">Extents</div>
<div class="t" style="left:307.5px;top:437.2px;font-size:10px;letter-spacing:0px;color:#111;">Vertical</div>
<div class="t" style="left:307.5px;top:448.9px;font-size:10px;letter-spacing:0px;color:#111;">Maximum</div>
<div class="t" style="left:307.5px;top:460.6px;font-size:10px;letter-spacing:0px;color:#111;">Extents</div>
<div class="t" style="left:389.5px;top:448.9px;font-size:10px;letter-spacing:0px;color:#111;">Vertical Scale</div>
<div class="t" style="left:471.5px;top:437.2px;font-size:10px;letter-spacing:0px;color:#111;">Vertical</div>
<div class="t" style="left:471.5px;top:448.9px;font-size:10px;letter-spacing:0px;color:#111;">Number</div>
<div class="t" style="left:471.5px;top:460.6px;font-size:10px;letter-spacing:0px;color:#111;">Divisions</div>
<div class="t" style="left:553.5px;top:437.2px;font-size:10px;letter-spacing:0px;color:#111;">Distance</div>
<div class="t" style="left:553.5px;top:448.9px;font-size:10px;letter-spacing:0px;color:#111;">Minimum</div>
<div class="t" style="left:553.5px;top:460.6px;font-size:10px;letter-spacing:0px;color:#111;">Extents</div>
<div class="t" style="left:635.5px;top:437.2px;font-size:10px;letter-spacing:0px;color:#111;">Distance</div>
<div class="t" style="left:635.5px;top:448.9px;font-size:10px;letter-spacing:0px;color:#111;">Maximum</div>
<div class="t" style="left:635.5px;top:460.6px;font-size:10px;letter-spacing:0px;color:#111;">Extents</div>
<div class="t" style="left:717.5px;top:448.9px;font-size:10px;letter-spacing:0px;color:#111;">Distance Scale</div>
<div class="t" style="left:799.5px;top:437.2px;font-size:10px;letter-spacing:0px;color:#111;">Distance</div>
<div class="t" style="left:799.5px;top:448.9px;font-size:10px;letter-spacing:0px;color:#111;">Number</div>
<div class="t" style="left:799.5px;top:460.6px;font-size:10px;letter-spacing:0px;color:#111;">Divisions</div>
<div class="a" style="left:28.7px;top:488.5px;width:848.3px;height:1.0px;background:#bdbdbd"></div>
<div class="a" style="left:451.0px;top:473.5px;width:14.0px;height:14.5px;background:#efefef"></div>
<svg class="a" style="left:456.5px;top:480px" width="5" height="3"><path d="M0 0 L5 0 L2.5 3 Z" fill="#111"/></svg>
<div class="a" style="left:779.0px;top:473.5px;width:14.0px;height:14.5px;background:#efefef"></div>
<svg class="a" style="left:784.5px;top:480px" width="5" height="3"><path d="M0 0 L5 0 L2.5 3 Z" fill="#111"/></svg>
<svg class="a" style="left:32px;top:478px" width="8" height="8" viewBox="0 0 8 8"><path d="M1 4 H7 M4 1 V7 M1.8 1.8 L6.2 6.2 M6.2 1.8 L1.8 6.2" stroke="#333" stroke-width="0.7"/><circle cx="4" cy="4" r="1.2" fill="#000"/></svg>
<div class="btn" style="left:666.2px;top:655.4px;width:68.5px;height:18.4px"></div>
<div class="t" style="left:684.0px;top:660.1px;font-size:10px;letter-spacing:-0.4px;color:#111;">Execute</div>
<div class="btn" style="left:742.1px;top:655.4px;width:68.7px;height:18.4px"></div>
<div class="t" style="left:762.2px;top:660.1px;font-size:10px;letter-spacing:-0.4px;color:#111;">Cancel</div>
<div class="btn" style="left:817.3px;top:655.4px;width:68.3px;height:18.4px"></div>
<div class="t" style="left:840.6px;top:660.1px;font-size:10px;letter-spacing:-0.4px;color:#111;">Reset</div>
<svg class="a" style="left:0;top:0" width="900" height="689"><ellipse cx="77.8" cy="368.2" rx="56" ry="19.6" fill="none" stroke="#ec1820" stroke-width="2.8"/></svg>
<svg class="a" style="left:113.5px;top:372px" width="10" height="15" viewBox="0 0 10 15"><path d="M0.6 0.6 L0.6 10.8 L3 8.6 L5 12.8 L6.6 12 L4.8 8 L8 8 Z" fill="#fff" stroke="#333a44" stroke-width="0.9"/></svg>
</body></html>
